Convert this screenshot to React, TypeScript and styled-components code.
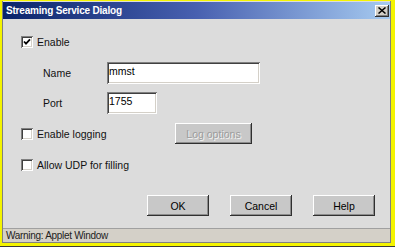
import React from 'react'
import styled, { createGlobalStyle } from 'styled-components'

const GlobalStyle = createGlobalStyle`
  html, body {
    margin: 0;
    padding: 0;
    background: #ffffff;
  }
  body {
    font-family: "Liberation Sans", Arial, sans-serif;
  }
`

const Frame = styled.div`
  width: 395px;
  height: 247px;
  box-sizing: border-box;
  border-bottom: 1px solid #3a3a3a;
  display: flex;
`

const YellowEdge = styled.div`
  flex: 1;
  display: flex;
  border-style: solid;
  border-color: #f4f400;
  border-width: 1px 4px 3px 2px;
`

const Window = styled.div`
  flex: 1;
  display: flex;
  flex-direction: column;
  padding-top: 1px;
  background: #dcdcdc;
  border: 1px solid #808080;
  border-top: none;
`

const TitleBar = styled.div`
  height: 17px;
  display: flex;
  align-items: center;
  justify-content: space-between;
  padding: 0 1px 0 3px;
  background: linear-gradient(90deg, #0a246a 0%, #4860b0 50%, #a6caf0 100%);
`

const TitleText = styled.span`
  color: #ffffff;
  font-size: 10px;
  font-weight: bold;
  letter-spacing: -0.2px;
`

const CloseButton = styled.div`
  width: 14px;
  height: 12px;
  display: flex;
  align-items: center;
  justify-content: center;
  background: #d4d0c8;
  box-shadow: inset -1px -1px #303030, inset 1px 1px #ffffff, inset -2px -2px #808080;
`

const Body = styled.div`
  flex: 1;
  display: flex;
  flex-direction: column;
  padding: 12px 15px 0 18px;
`

const Row = styled.div<{ $h: number; $mt: number; $indent?: number }>`
  display: flex;
  align-items: center;
  height: ${p => p.$h}px;
  margin-top: ${p => p.$mt}px;
  padding-left: ${p => p.$indent ?? 0}px;
`

const CheckLabel = styled.label<{ $width?: number }>`
  display: flex;
  align-items: center;
  gap: 4px;
  width: ${p => (p.$width ? `${p.$width}px` : 'auto')};
  font-size: 10.5px;
  color: #111111;
`

const Box = styled.span`
  width: 12px;
  height: 12px;
  box-sizing: border-box;
  display: flex;
  align-items: center;
  justify-content: center;
  background: #ffffff;
  box-shadow: inset 1px 1px #808080, inset -1px -1px #ffffff, inset 2px 2px #404040,
    inset -2px -2px #d4d0c8;
`

const FieldLabel = styled.span`
  width: 64px;
  font-size: 10.5px;
  color: #111111;
`

const TextBox = styled.input<{ $width: number }>`
  width: ${p => p.$width}px;
  height: 22px;
  box-sizing: border-box;
  border: none;
  outline: none;
  margin: 0;
  padding: 0 2px 5px 2px;
  background: #ffffff;
  font-family: "Liberation Sans", Arial, sans-serif;
  font-size: 10.5px;
  color: #000000;
  box-shadow: inset 1px 1px #808080, inset -1px -1px #ffffff, inset 2px 2px #404040,
    inset -2px -2px #d4d0c8;
`

const PushButton = styled.button<{ $width: number }>`
  width: ${p => p.$width}px;
  height: 21px;
  box-sizing: border-box;
  border: none;
  margin: 0;
  padding: 0;
  background: #c8c8c8;
  font-family: "Liberation Sans", Arial, sans-serif;
  font-size: 10.5px;
  color: #000000;
  box-shadow: inset -1px -1px #303030, inset 1px 1px #ffffff, inset -2px -2px #8c8c8c;

  &:disabled {
    color: #9c9c9c;
    text-shadow: 1px 1px #f4f4f4;
  }
`

const ButtonRow = styled(Row)`
  justify-content: flex-end;
  gap: 21px;
`

const StatusBar = styled.div`
  height: 13px;
  display: flex;
  align-items: center;
  padding-left: 3px;
  border-top: 1px solid #a0a0a0;
  background: #d4d0c8;
  font-size: 10px;
  letter-spacing: -0.3px;
  color: #222222;
`

const Checkbox = ({ checked, label, width }: { checked?: boolean; label: string; width?: number }) => (
  <CheckLabel $width={width}>
    <Box>
      {checked && (
        <svg width="8" height="8" viewBox="0 0 8 8">
          <path d="M1 3.5 L3 5.6 L7 1.4" stroke="#000" strokeWidth="1.8" fill="none" />
        </svg>
      )}
    </Box>
    {label}
  </CheckLabel>
)

export default function App() {
  return (
    <>
      <GlobalStyle />
      <Frame>
        <YellowEdge>
          <Window>
            <TitleBar>
              <TitleText>Streaming Service Dialog</TitleText>
              <CloseButton>
                <svg width="8" height="7" viewBox="0 0 8 7">
                  <path d="M0.5 0.5 L7.5 6.5 M7.5 0.5 L0.5 6.5" stroke="#000" strokeWidth="1.5" />
                </svg>
              </CloseButton>
            </TitleBar>
            <Body>
              <Row $h={22} $mt={0}>
                <Checkbox checked label="Enable" />
              </Row>
              <Row $h={22} $mt={9} $indent={22}>
                <FieldLabel>Name</FieldLabel>
                <TextBox $width={153} defaultValue="mmst" readOnly />
              </Row>
              <Row $h={22} $mt={8} $indent={22}>
                <FieldLabel>Port</FieldLabel>
                <TextBox $width={50} defaultValue="1755" readOnly />
              </Row>
              <Row $h={21} $mt={9}>
                <Checkbox label="Enable logging" width={154} />
                <PushButton $width={77} disabled>
                  Log options
                </PushButton>
              </Row>
              <Row $h={21} $mt={10}>
                <Checkbox label="Allow UDP for filling" />
              </Row>
              <ButtonRow $h={21} $mt={20}>
                <PushButton $width={62}>OK</PushButton>
                <PushButton $width={62}>Cancel</PushButton>
                <PushButton $width={62}>Help</PushButton>
              </ButtonRow>
            </Body>
            <StatusBar>Warning: Applet Window</StatusBar>
          </Window>
        </YellowEdge>
      </Frame>
    </>
  )
}
